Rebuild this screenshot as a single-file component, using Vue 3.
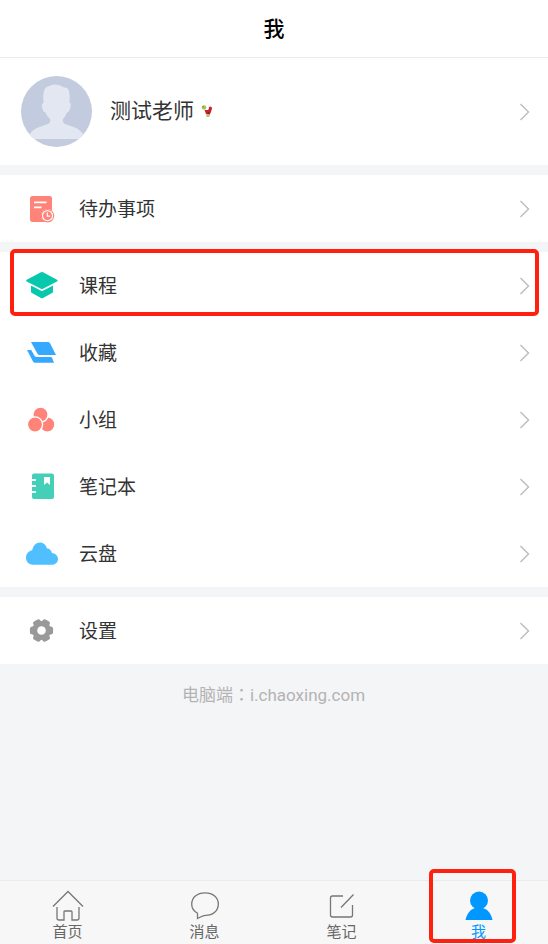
<script setup>
const groups = [
  [{ id: 'todo', label: '待办事项' }],
  [
    { id: 'course', label: '课程', marked: true },
    { id: 'favorite', label: '收藏' },
    { id: 'team', label: '小组' },
    { id: 'notebook', label: '笔记本' },
    { id: 'cloud', label: '云盘' }
  ],
  [{ id: 'settings', label: '设置' }]
]

const tabs = [
  { id: 'home', label: '首页' },
  { id: 'message', label: '消息' },
  { id: 'note', label: '笔记' },
  { id: 'me', label: '我', active: true }
]
</script>

<template>
  <div class="page">
    <header class="header"><h1>我</h1></header>

    <main class="content">
      <a class="profile" href="#profile">
        <svg class="avatar" viewBox="0 0 71 71" aria-hidden="true">
          <defs>
            <clipPath id="avatar-clip"><circle cx="35.500" cy="35.500" r="35.500" /></clipPath>
          </defs>
          <g clip-path="url(#avatar-clip)">
            <rect width="71" height="71" fill="#c3ccde" />
            <path
              fill="#e2e7f1"
              d="M22.500 27 Q21 12 27 10.500 Q35 6 43 11.500 Q47 11 48 15 Q49 19 48.500 26.500 Q50.500 27 49.500 31 Q48.500 36 46 36.500 Q44.500 41 42 43 Q41 46 44 48 C51 51 61 51.500 64 63 H7 C10 51.500 20 51 27 48 Q30 46 29 43 Q26 41 24.500 36.500 Q22 36 21 31 Q20.500 27 22.500 27Z"
            />
          </g>
        </svg>
        <span class="name">测试老师</span>
        <svg class="medal" viewBox="0 0 12 14" aria-hidden="true">
          <circle cx="3" cy="3.500" r="2.300" fill="#9ccc58" />
          <circle cx="2.200" cy="2.800" r="0.800" fill="#e4573d" />
          <path d="M3.500 6 L7 6 L9 3 L11 4 L10 8 L8.500 11 L5 10Z" fill="#cc1f2e" />
          <circle cx="9.300" cy="4" r="1.500" fill="#ba2838" />
          <circle cx="7" cy="11.500" r="1.800" fill="#a7c969" />
          <circle cx="7.500" cy="9" r="1" fill="#8e1520" />
        </svg>
        <svg class="chevron" viewBox="0 0 10 18" aria-hidden="true"><path d="M1 1 L9 9 L1 17" /></svg>
      </a>

      <nav v-for="(group, index) in groups" :key="index" class="group">
        <a v-for="item in group" :key="item.id" class="row" :href="'#' + item.id">
          <svg class="icon" viewBox="0 0 35 35" aria-hidden="true">
            <g v-if="item.id === 'todo'">
              <rect x="6" y="5" width="22" height="26" rx="2.500" fill="#ff8379" />
              <path d="M10 11.300 H22.500 M10 16.300 H17.500" stroke="#fff" stroke-width="1.700" />
              <circle cx="23.500" cy="24.700" r="6" fill="#ff8379" stroke="#fff" stroke-width="1.200" />
              <circle cx="23.500" cy="24.700" r="6.100" fill="none" stroke="#ff8379" stroke-width="1.200" />
              <circle cx="23.500" cy="24.700" r="5" fill="none" stroke="#fff" stroke-width="1.100" />
              <path d="M23.300 21.500 V25.200 H26.200" fill="none" stroke="#fff" stroke-width="1.200" />
            </g>
            <g v-else-if="item.id === 'course'" fill="#05c8ad">
              <path d="M17 4.300 Q18 3.700 19 4.300 L33 11.700 Q34.500 12.600 33 13.500 L19 20.700 Q18 21.300 17 20.700 L2.700 13.500 Q1.500 12.600 2.700 11.700Z" />
              <path d="M7 17.500 L17 22.800 Q18 23.300 19 22.800 L29 17.500 V23.500 Q29 24.500 28 25 L19 30 Q18 30.600 17 30 L8 25 Q7 24.500 7 23.500Z" />
            </g>
            <g v-else-if="item.id === 'favorite'" fill="#35a9ff">
              <path d="M7 7 H24 Q25.300 7 26 8.200 L32 20 H15.500 Q14.300 20 13.600 19Z" />
              <path d="M3 15 H7.200 L10.500 20.700 Q11.200 22 12.500 22 H26.500 Q27.700 22 28.200 23 L30 27.800 H11 Q9.800 27.800 9 26.500Z" />
            </g>
            <g v-else-if="item.id === 'team'" fill="#ff8379" stroke="#fff" stroke-width="1.400">
              <circle cx="23.300" cy="22.500" r="7.600" />
              <circle cx="16.500" cy="12.700" r="7.600" />
              <circle cx="11" cy="22.500" r="7.600" />
            </g>
            <g v-else-if="item.id === 'notebook'">
              <rect x="8" y="4.500" width="22" height="25.500" rx="2" fill="#43cfb8" />
              <path d="M7 11 H11.200 M7 17 H11.200 M7 23 H11.200" stroke="#fff" stroke-width="1.900" stroke-linecap="round" />
              <path d="M20 8 H26 V16 L23 13.600 L20 16Z" fill="#fff" />
            </g>
            <path
              v-else-if="item.id === 'cloud'"
              fill="#50bfff"
              d="M9 28.800 C5 28.800 2 25.800 2 21.800 C2 18 4.500 15 8.200 14.300 C9 9.700 12 6.500 16 6.500 C19.500 6.500 22 9 23 12.500 Q26.500 12.200 28 17 C31.500 17.500 34 20 34 23 C34 26.200 31.500 28.800 28 28.800Z"
            />
            <g v-else>
              <g fill="#999">
                <circle cx="17.500" cy="17.500" r="9.600" />
                <rect v-for="angle in [0, 60, 120]" :key="angle" x="5.900" y="13.500" width="23.200" height="8" rx="2.500" :transform="'rotate(' + angle + ' 17.500 17.500)'" />
              </g>
              <circle cx="17.500" cy="17.500" r="4.300" fill="#fff" />
            </g>
          </svg>
          <span class="label">{{ item.label }}</span>
          <svg class="chevron" viewBox="0 0 10 18" aria-hidden="true"><path d="M1 1 L9 9 L1 17" /></svg>
          <span v-if="item.marked" class="mark mark-row"></span>
        </a>
      </nav>

      <p class="site">电脑端<span class="colon">：</span>i.chaoxing.com</p>
    </main>

    <nav class="tabs">
      <a v-for="tab in tabs" :key="tab.id" class="tab" :class="{ active: tab.active }" :href="'#' + tab.id">
        <svg class="tab-icon" viewBox="0 0 32 32" aria-hidden="true">
          <g v-if="tab.id === 'home'">
            <path d="M1 16.500 L16 1.500 L31 16.500" />
            <path d="M5 17 V28 Q5 30 7 30 H12 V21.500 Q12 21 13 21 H19 Q20 21 20 22 V30 H25 Q27 30 27 28 V17" />
          </g>
          <path v-else-if="tab.id === 'message'" d="M8.500 28.500 V23.300 C4.500 21 2.700 18 2.700 14.300 C2.700 7.500 8 2.800 16 2.800 C24 2.800 29.300 7.500 29.300 14 C29.300 21 24 25.300 16.500 25.300 C13.500 25.300 11 27.500 8.500 28.500Z" />
          <path v-else-if="tab.id === 'note'" d="M17 6 H6.500 Q4.500 6 4.500 8 V25 Q4.500 27 6.500 27 H24.500 Q26.500 27 26.500 25 V15 M15 17.500 L27.500 4.500" />
          <g v-else class="person">
            <ellipse cx="16" cy="10.500" rx="9" ry="9" />
            <path d="M2.500 30 C4 23 7.500 19.500 12 18 H20 C24.500 19.500 28 23 29.500 30Z" />
          </g>
        </svg>
        <span>{{ tab.label }}</span>
        <span v-if="tab.active" class="mark mark-tab"></span>
      </a>
    </nav>
  </div>
</template>

<style>
body {
  margin: 0;
  background: #f4f5f7;
}
</style>

<style scoped>
.page {
  display: flex;
  flex-direction: column;
  min-height: 100vh;
  font-family: Roboto, "Noto Sans CJK SC", sans-serif;
  color: #333;
  background: #f4f5f7;
}
a {
  color: inherit;
  text-decoration: none;
}
.header {
  padding: 14px 0 13px;
  border-bottom: 1px solid #ebebeb;
  background: #fff;
  text-align: center;
}
.header h1 {
  margin: 0;
  font-size: 21px;
  line-height: 30px;
  font-weight: 500;
  color: #000;
}
.content {
  display: flex;
  flex: 1;
  flex-direction: column;
  gap: 10px;
}
.profile {
  display: flex;
  align-items: center;
  padding: 18px 18px 18px 21px;
  background: #fff;
}
.avatar {
  width: 71px;
  height: 71px;
  margin-right: 18px;
}
.name {
  padding-bottom: 2px;
  font-size: 21px;
  line-height: 30px;
}
.medal {
  width: 12px;
  height: 14px;
  margin-left: 7px;
  padding-bottom: 2px;
}
.chevron {
  width: 11px;
  height: 18px;
  margin-left: auto;
  fill: none;
  stroke: #bfbfbf;
  stroke-width: 1.500;
}
.group {
  background: #fff;
}
.row {
  position: relative;
  display: flex;
  align-items: center;
  padding: 16px 18px 16px 24px;
}
.icon {
  width: 35px;
  height: 35px;
  margin-right: 20px;
}
.label {
  padding-top: 2px;
  font-size: 19px;
  line-height: 28px;
}
.site {
  margin: 7px 0;
  padding-right: 1px;
  font-size: 17px;
  line-height: 26px;
  text-align: center;
  color: #b3b3b3;
}
.colon {
  font-family: "Noto Sans CJK TC", sans-serif;
}
.tabs {
  display: flex;
  border-top: 1px solid #e8ecef;
  background: #f7f7f7;
}
.tab {
  position: relative;
  display: flex;
  flex: 1;
  flex-direction: column;
  align-items: center;
  padding: 9px 2px 2px 0;
  font-size: 15px;
  line-height: 20px;
  color: #666;
}
.tab-icon {
  width: 32px;
  height: 32px;
  fill: none;
  stroke: #777;
  stroke-width: 1.300;
}
.tab.active {
  color: #0097ff;
}
.person {
  fill: #0097ff;
  stroke: none;
}
.mark {
  position: absolute;
  z-index: 1;
  box-sizing: border-box;
  border: 4px solid #ff2010;
  border-radius: 5px;
  pointer-events: none;
}
.mark-row {
  inset: -3px 9px 3px 10px;
}
.mark-tab {
  inset: -12px 32px 1px 18px;
}
</style>
